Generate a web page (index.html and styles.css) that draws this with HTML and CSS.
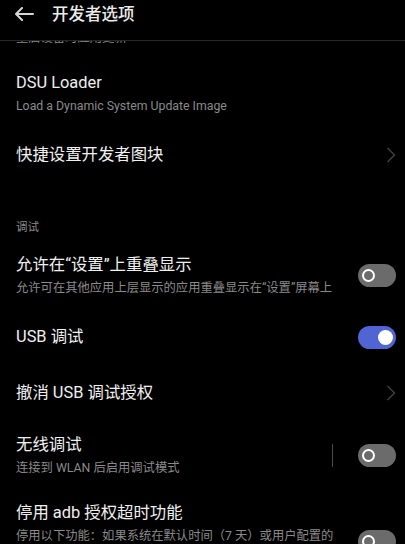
FILE: index.html
```html
<!DOCTYPE html>
<html lang="zh">
<head>
<meta charset="utf-8">
<link rel="stylesheet" href="styles.css">
</head>
<body>
<div class="screen">
  <header class="topbar">
    <svg class="back" width="20" height="14" viewBox="0 0 20 14">
      <path d="M19 7H2M8 1L2 7l6 6" fill="none" stroke="#d6d6d6" stroke-width="2" stroke-linecap="round" stroke-linejoin="round"/>
    </svg>
    <h1 class="title">开发者选项</h1>
  </header>
  <main class="list">
    <div class="clip"><div class="sub clip-text">重启设备时应用更新</div></div>

    <div class="row two">
      <div class="texts">
        <div class="primary">DSU Loader</div>
        <div class="sub">Load a Dynamic System Update Image</div>
      </div>
    </div>

    <div class="row one">
      <div class="texts"><div class="primary">快捷设置开发者图块</div></div>
      <svg class="chev" width="10" height="16" viewBox="0 0 10 16"><path d="M1.5 1l7 7-7 7" fill="none" stroke="#3d3d3d" stroke-width="1.6"/></svg>
    </div>

    <div class="section">调试</div>

    <div class="row two">
      <div class="texts">
        <div class="primary">允许在“设置”上重叠显示</div>
        <div class="sub">允许可在其他应用上层显示的应用重叠显示在“设置”屏幕上</div>
      </div>
      <span class="switch off"><span class="knob"></span></span>
    </div>

    <div class="row one">
      <div class="texts"><div class="primary">USB 调试</div></div>
      <span class="switch on"><span class="knob"></span></span>
    </div>

    <div class="row one">
      <div class="texts"><div class="primary">撤消 USB 调试授权</div></div>
      <svg class="chev" width="10" height="16" viewBox="0 0 10 16"><path d="M1.5 1l7 7-7 7" fill="none" stroke="#3d3d3d" stroke-width="1.6"/></svg>
    </div>

    <div class="row two">
      <div class="texts">
        <div class="primary">无线调试</div>
        <div class="sub">连接到 WLAN 后启用调试模式</div>
      </div>
      <span class="vdiv"></span>
      <span class="switch off"><span class="knob"></span></span>
    </div>

    <div class="row two">
      <div class="texts">
        <div class="primary">停用 adb 授权超时功能</div>
        <div class="sub">停用以下功能：如果系统在默认时间（7 天）或用户配置的时间（最少 1 天）内未重新连接 ADB，则自动撤消 ADB 授权。</div>
      </div>
      <span class="switch off"><span class="knob"></span></span>
    </div>
  </main>
</div>
</body>
</html>
```

FILE: styles.css
```css
* { box-sizing: border-box; margin: 0; padding: 0; }
html, body { background: #000; }
body {
  font-family: Roboto, "Noto Sans CJK SC", sans-serif;
  color: #f0f0f0;
  width: 405px;
  height: 544px;
  overflow: hidden;
}
.screen { width: 405px; height: 544px; overflow: hidden; display: flex; flex-direction: column; }
.topbar {
  height: 41px;
  flex: none;
  display: flex;
  align-items: flex-start;
  padding: 4px 0 0 14px;
  border-bottom: 1px solid #262626;
}
.back { margin-top: 3px; }
.title {
  font-size: 16.5px;
  font-weight: 500;
  line-height: 22px;
  margin-left: 18px;
  color: #ececec;
}
.list { flex: 1; overflow: hidden; }
.row {
  display: flex;
  align-items: center;
  padding: 0 9px 0 16px;
}
.row.one { height: 56px; }
.row.two { padding-top: 13px; padding-bottom: 12.5px; align-items: center; }
.texts { flex: 1; min-width: 0; }
.primary { font-size: 16.4px; line-height: 22px; color: #f0f0f0; }
.sub {
  font-size: 12.3px;
  line-height: 18px;
  color: #8a8a8a;
  margin-top: 2.5px;
  padding-right: 14px;
}
.clip { height: 18px; overflow: hidden; padding-left: 16px; }
.clip .clip-text { margin-top: -12px; }
.section {
  font-size: 11.5px;
  line-height: 16px;
  color: #8a8a8a;
  padding: 36px 16px 6px;
}
.chev { flex: none; }
.vdiv {
  width: 1px;
  height: 23px;
  background: #4a4a4a;
  margin-right: 25px;
  flex: none;
}
.switch {
  flex: none;
  width: 38px;
  height: 23px;
  border-radius: 12px;
  position: relative;
  display: block;
}
.switch.off { background: #6b6b6b; }
.switch.on { background: #5064d4; }
.switch .knob {
  position: absolute;
  top: 50%;
  border-radius: 50%;
}
.switch.off .knob {
  left: 4px;
  width: 13px;
  height: 13px;
  margin-top: -6.5px;
  border: 2.6px solid #fff;
}
.switch.on .knob {
  right: 3px;
  width: 15px;
  height: 15px;
  margin-top: -7.5px;
  background: #fff;
}
```
